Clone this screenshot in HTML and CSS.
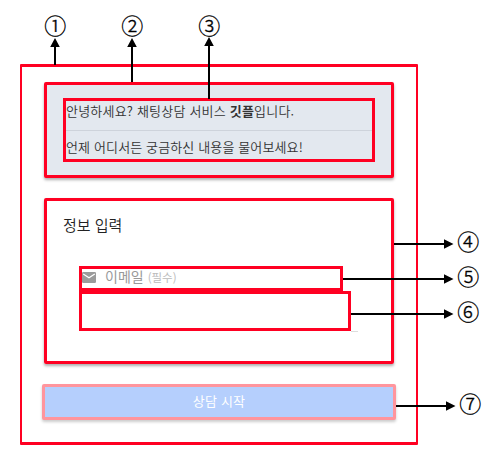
FILE: index.html
```html
<!DOCTYPE html>
<html lang="ko">
<head>
<meta charset="utf-8">
<title>채팅상담</title>
<link rel="stylesheet" href="styles.css">
</head>
<body>
<main class="frame">
  <section class="card welcome">
    <div class="message">
      <p><span class="line1">안녕하세요? 채팅상담 서비스 <b>깃플</b>입니다.</span></p>
      <p><span class="line2">언제 어디서든 궁금하신 내용을 물어보세요!</span></p>
    </div>
  </section>
  <section class="card form">
    <h1>정보 입력</h1>
    <div class="label">
      <svg class="mail" viewBox="0 0 14 11"><rect width="14" height="11" rx="1.2" fill="#9b9b9b"/><path d="M1.2 2 7 5.8 12.8 2" fill="none" stroke="#fff" stroke-width="1.2"/></svg>
      <span class="name">이메일</span><span class="hint">(필수)</span>
    </div>
    <div class="field"></div>
  </section>
  <button class="start">상담 시작</button>
</main>
<svg class="callouts" viewBox="0 0 499 467">
  <g stroke="#000" stroke-width="2">
    <path d="M55 46V65M132 46V82M209 45V99M394 244H445M343 279H445M351 314H445M396 406H447"/>
  </g>
  <path d="M55 38l4.800 9h-9.600zM132 38l4.800 9h-9.600zM209 37l4.800 9h-9.600zM453.500 244l-9.500-4.700v9.400zM453.500 279l-9.500-4.700v9.400zM453.500 314l-9.500-4.700v9.400zM455.500 406l-9.500-4.700v9.400z"/>
  <g class="numbers">
    <text x="55.300" y="34">①</text>
    <text x="132.300" y="34">②</text>
    <text x="209.300" y="34">③</text>
    <text x="468.300" y="250">④</text>
    <text x="468.300" y="285">⑤</text>
    <text x="468.300" y="320">⑥</text>
    <text x="470.300" y="412">⑦</text>
  </g>
</svg>
</body>
</html>
```
FILE: styles.css
```css
* { box-sizing: border-box; }

body {
  margin: 0;
  height: 467px;
  padding: 64px 0 0 20px;
  overflow: hidden;
  background: #fff;
  color: #333;
  font-family: "Noto Sans CJK KR", sans-serif;
}

.frame {
  width: 398px;
  height: 381px;
  padding: 15px 20px 0;
  border: solid #ff0022;
  border-width: 3px 2px;
  border-radius: 1px;
}

.card {
  width: 350px;
  margin: 0 2px;
  border: 3px solid #ff0022;
  border-radius: 2px;
  box-shadow: 0 2px 3px rgba(0, 0, 0, .32);
}

.welcome {
  height: 96px;
  padding: 13px 16px;
  background: #e3e8ef;
}

.message {
  width: 312px;
  height: 64px;
  border: 3px solid #ff0022;
}

.message p {
  height: 29px;
  margin: 0;
  font-size: 13px;
  font-weight: 350;
  line-height: 20px;
  white-space: nowrap;
}

.message p + p {
  border-top: 1px solid #ced3db;
  line-height: 32px;
}

.message b { font-weight: 700; }

.line1 { letter-spacing: .2px; }
.line2 { letter-spacing: .13px; }

.form {
  height: 166px;
  margin-top: 20px;
  padding: 13px 0 0 32px;
}

h1 {
  height: 24px;
  margin: 0 0 28px -16px;
  color: #222;
  font-size: 15px;
  font-weight: 350;
  line-height: 22px;
}

.label {
  display: flex;
  align-items: center;
  width: 264px;
  height: 25px;
  border: 3px solid #ff0022;
  white-space: nowrap;
}

.mail {
  width: 14px;
  height: 11px;
  margin: -3px 9px 0 0;
}

.name {
  margin-top: -5px;
  color: #999;
  font-size: 14px;
  line-height: 18px;
}

.hint {
  margin: -3px 0 0 4px;
  color: #bbb;
  font-size: 11.5px;
  line-height: 18px;
}

.field {
  width: 272px;
  height: 40px;
  border: 3px solid #ff0022;
}

.field::after {
  content: "";
  display: block;
  width: 7px;
  height: 1px;
  margin: 37px 0 0 269px;
  background: #ddd;
}

.start {
  display: block;
  width: 354px;
  height: 36px;
  margin: 20px 0 0;
  padding: 0 0 2px;
  border: 3px solid #ff959d;
  border-radius: 2px;
  background: #b5cffd;
  box-shadow: 0 2px 3px rgba(0, 0, 0, .2);
  color: #fff;
  font: 13px/28px "Noto Sans CJK KR", sans-serif;
  letter-spacing: .2px;
}

.callouts {
  position: absolute;
  top: 0;
  left: 0;
  width: 499px;
  height: 467px;
}

.numbers {
  font-family: "Noto Sans CJK KR", sans-serif;
  font-size: 22px;
  font-weight: 300;
  stroke: #000;
  stroke-width: .35px;
  text-anchor: middle;
}
```
